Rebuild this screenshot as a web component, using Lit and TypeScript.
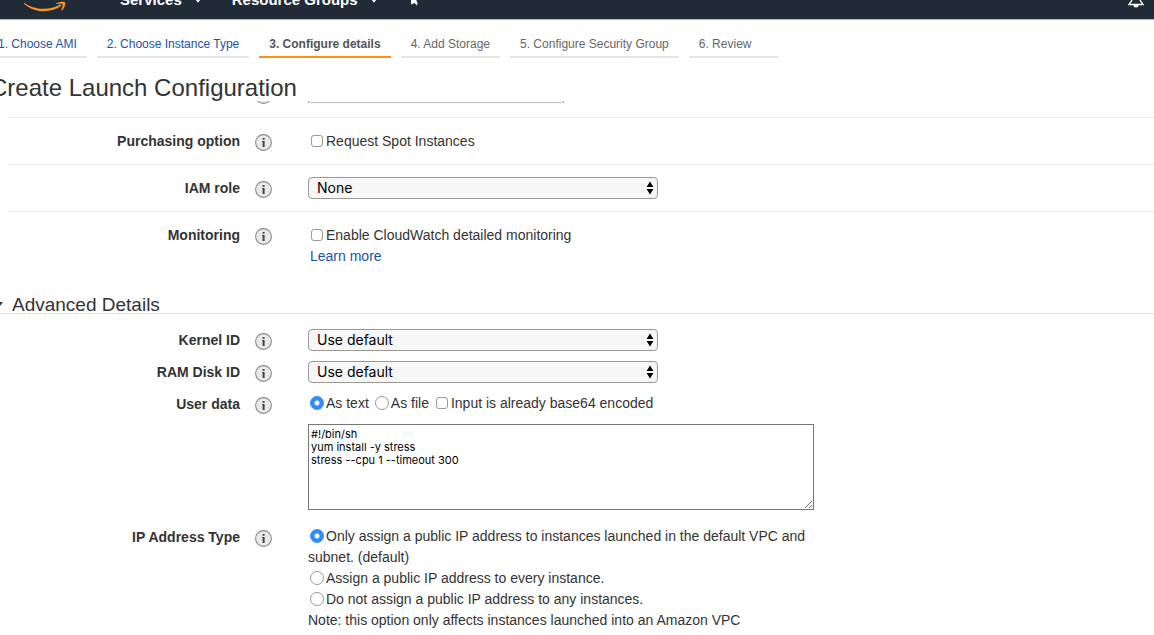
import { LitElement, html, css, svg, nothing } from "lit";
import { customElement, property } from "lit/decorators.js";

type Step = { label: string; state: "done" | "current" | "todo" };

const STEPS: Step[] = [
  { label: "1. Choose AMI", state: "done" },
  { label: "2. Choose Instance Type", state: "done" },
  { label: "3. Configure details", state: "current" },
  { label: "4. Add Storage", state: "todo" },
  { label: "5. Configure Security Group", state: "todo" },
  { label: "6. Review", state: "todo" },
];

const caret = svg`<svg class="caret" viewBox="0 0 8 6" width="8" height="6" aria-hidden="true"><path d="M0 0.500h8L4 5.800z" fill="#fff"/></svg>`;

@customElement("console-header")
class ConsoleHeader extends LitElement {
  static styles = css`
    :host { display: block; overflow: hidden; height: 19px; background: #212a37; border-bottom: 1px solid #b4b8bd; }
    .bar { display: flex; align-items: center; height: 40px; margin-top: -20px; padding: 0 10px 0 23px; }
    .logo { width: 44px; height: 40px; margin-right: 53px; }
    .logo svg, .tool svg { display: block; }
    button {
      display: flex; align-items: center; gap: 12px; margin: 0 30px 0 0; padding: 0; border: 0; background: none;
      color: #fff; font: bold 15px/20px "Liberation Sans", Arial, sans-serif;
    }
    .tool { margin-right: 0; }
    .bell { margin-left: auto; }
  `;
  render() {
    return html`
      <div class="bar">
        <a class="logo" aria-label="Console home">
          <svg width="44" height="40" viewBox="0 0 44 40">
            <path d="M1 22.500c5 4 12 6.300 19.500 6.300 6 0 12-1.600 16.500-4.300 1.200-.5 1.800.7.900 1.600C33.500 29.500 27 31.300 20.500 31.300 13 31.300 5.500 28.300 0.800 23.500z" fill="#f7941e"/>
            <path d="M33 23.300c3.200-1.800 8-2 9-1 .9 1.200-.2 5.700-3 8.200l-.8-.4c1-2.200 1.900-5 1.400-5.800-.7-.8-3.600-.6-6.300-.3z" fill="#f7941e"/>
          </svg>
        </a>
        <button type="button">Services ${caret}</button>
        <button type="button">Resource Groups ${caret}</button>
        <button type="button" class="tool" aria-label="Shortcuts">
          <svg width="12" height="40" viewBox="0 0 12 40"><path d="M3 16h6v3.500h-1L9.500 23l-.5 2.500-2.500-2.500L3 24.500V20z" fill="#fff"/></svg>
        </button>
        <button type="button" class="tool bell" aria-label="Notifications">
          <svg width="16" height="40" viewBox="0 0 16 40"><path d="M1 24.500h14l-2.500-3.500-1.500-7H5l-1.500 7z" fill="none" stroke="#fff" stroke-width="1.300"/><path d="M5.500 25h5a2.500 2.500 0 0 1-5 0z" fill="#fff"/></svg>
        </button>
      </div>`;
  }
}

@customElement("wizard-steps")
class WizardSteps extends LitElement {
  static styles = css`
    :host { display: block; overflow: hidden; }
    ol { display: flex; gap: 10px; margin: 0 0 0 -12px; padding: 14px 0 0; list-style: none; }
    li { flex: none; box-sizing: border-box; min-width: 90px; padding: 0 10px 1px; border-bottom: 2px solid #e6e6e6; color: #666; font-size: 12px; line-height: 21px; white-space: nowrap; }
    a { color: #1c53a3; text-decoration: none; }
    .current { border-color: #ff8f12; color: #545454; font-weight: bold; }
  `;
  render() {
    return html`<ol>
      ${STEPS.map((s) => html`<li class=${s.state}>${s.state === "done" ? html`<a href="#">${s.label}</a>` : s.label}</li>`)}
    </ol>`;
  }
}

@customElement("form-row")
class FormRow extends LitElement {
  @property() label = "";
  static styles = css`
    :host { display: grid; grid-template-columns: 232px 17px minmax(0, 506px); column-gap: 15px; margin-left: 8px; padding: 5px 0; }
    .label { text-align: right; font-weight: bold; line-height: 22px; min-height: 22px; }
    .info { display: block; margin-top: 4px; padding: 0; border: 0; background: none; width: 17px; height: 17px; }
    .info svg { display: block; }
    .field { margin-left: 21px; margin-right: -21px; }
  `;
  render() {
    return html`
      <div class="label">${this.label || nothing}</div>
      <button type="button" class="info" aria-label="More information">
        <svg width="17" height="17" viewBox="0 0 17 17">
          <circle cx="8.500" cy="8.500" r="7.900" fill="#e9e9e9" stroke="#8b8b8b" stroke-width="1.100"/>
          <path d="M7.600 4h2v1.700h-2zM7 7h2.600v6h-2V8H7z" fill="#444"/>
        </svg>
      </button>
      <div class="field"><slot></slot></div>`;
  }
}

@customElement("app-root")
class AppRoot extends LitElement {
  static styles = css`
    :host { display: block; min-height: 100vh; overflow: hidden; background: #fff; color: #333; font: 14px/21px "Liberation Sans", Arial, sans-serif; }
    h1 { margin: 17px 0 0 -10px; font-size: 24px; line-height: 26px; font-weight: normal; }
    .pane { overflow: hidden; }
    .ruled { padding: 12px 0; border-top: 1px solid #e9e9e9; }
    .ruled .line { margin-top: 1px; }
    .clipped { margin-top: -30px; border-top: 0; }
    .name { display: block; box-sizing: border-box; width: 256px; height: 20px; border: 1px solid #bbb; padding: 0 4px; }
    .advanced { display: flex; align-items: center; gap: 9px; margin: 18px 0 10px; border-bottom: 1px solid #e2e2e2; font-size: 19px; line-height: 16px; font-weight: normal; }
    .advanced svg { margin-left: -6px; }
    .select { display: grid; width: 350px; max-width: 100%; align-items: center; }
    .select > * { grid-area: 1 / 1; }
    .select svg { justify-self: end; margin-right: 4px; pointer-events: none; }
    select { appearance: none; box-sizing: border-box; width: 100%; height: 22px; margin: 0; padding: 0 20px 0 8px; border: 1px solid #999; border-radius: 4px; background: #f6f6f6; color: #000; font: 14px/20px Inter, sans-serif; }
    input[type="checkbox"], input[type="radio"] { appearance: none; box-sizing: border-box; border: 1px solid #999; background: #fff; vertical-align: -1px; }
    input[type="checkbox"] { width: 12px; height: 12px; margin: 0 3px; border-radius: 3px; }
    input[type="radio"] { width: 14px; height: 14px; margin: 0 2px; border-radius: 50%; vertical-align: -2px; }
    input[type="radio"]:checked { border-color: #2f8cff; background: radial-gradient(circle, #fff 0 2px, #2f8cff 3px); }
    .learn { margin-left: 2px; color: #1c53a3; text-decoration: none; }
    .line { display: block; }
    .inline { display: flex; gap: 4px; white-space: nowrap; }
    textarea { display: block; box-sizing: border-box; width: 100%; height: 86px; margin: 10px 0 6px; padding: 3px 2px; border: 1px solid #777; color: #000; font: 11px/13px Inter, sans-serif; }
  `;

  private select(value: string, name: string) {
    return html`<div class="select">
      <select aria-label=${name}><option>${value}</option></select>
      <svg width="8" height="14" viewBox="0 0 8 14" aria-hidden="true"><path d="M4 0.500L7.400 6H0.600zM4 13.500L0.600 8h6.800z" fill="#000"/></svg>
    </div>`;
  }

  render() {
    return html`
      <console-header></console-header>
      <wizard-steps></wizard-steps>
      <h1>Create Launch Configuration</h1>
      <main class="pane">
        <form-row class="ruled clipped"><input class="name" type="text" aria-label="Launch configuration" /></form-row>
        <form-row class="ruled" label="Purchasing option">
          <label class="line"><input type="checkbox" />Request Spot Instances</label>
        </form-row>
        <form-row class="ruled" label="IAM role">${this.select("None", "IAM role")}</form-row>
        <form-row class="ruled" label="Monitoring">
          <label class="line"><input type="checkbox" />Enable CloudWatch detailed monitoring</label>
          <a class="learn" href="#">Learn more</a>
        </form-row>
        <h2 class="advanced">
          <svg width="9" height="6" viewBox="0 0 9 6" aria-hidden="true"><path d="M0 0h9L4.500 6z" fill="#333"/></svg>
          Advanced Details
        </h2>
        <form-row label="Kernel ID">${this.select("Use default", "Kernel ID")}</form-row>
        <form-row label="RAM Disk ID">${this.select("Use default", "RAM Disk ID")}</form-row>
        <form-row label="User data">
          <div class="inline">
            <label><input type="radio" name="data" checked />As text</label>
            <label><input type="radio" name="data" />As file</label>
            <label><input type="checkbox" />Input is already base64 encoded</label>
          </div>
          <textarea aria-label="User data" spellcheck="false" .value=${"#!/bin/sh\nyum install -y stress\nstress --cpu 1 --timeout 300"}></textarea>
        </form-row>
        <form-row label="IP Address Type">
          <label class="line"><input type="radio" name="ip" checked />Only assign a public IP address to instances launched in the default VPC and subnet. (default)</label>
          <label class="line"><input type="radio" name="ip" />Assign a public IP address to every instance.</label>
          <label class="line"><input type="radio" name="ip" />Do not assign a public IP address to any instances.</label>
          <span class="line">Note: this option only affects instances launched into an Amazon VPC</span>
        </form-row>
      </main>`;
  }
}
